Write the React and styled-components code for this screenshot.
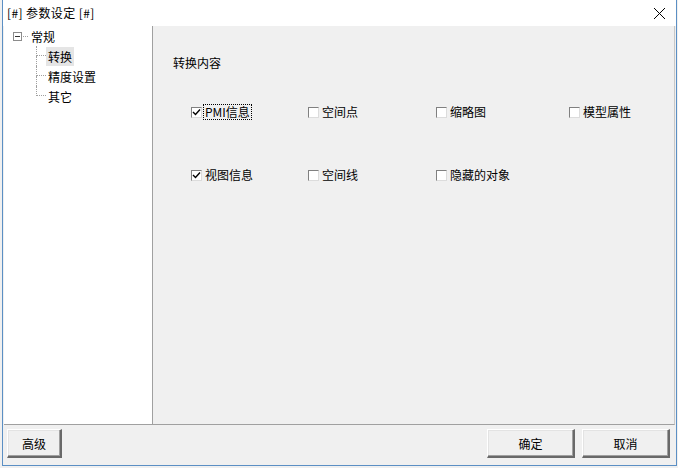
import React from 'react';
import styled, { createGlobalStyle } from 'styled-components';

const GlobalStyle = createGlobalStyle`
	html, body {
		margin: 0;
		padding: 0;
		background: #f0f0f0;
	}
	body {
		font-family: 'Noto Sans CJK SC', 'Liberation Sans', sans-serif;
		font-size: 12px;
		color: #000;
	}
`;

const Window = styled.div`
	margin-left: 2px;
	width: 675px;
	height: 466px;
	box-sizing: border-box;
	border: 1px solid #5b8fc4;
	border-top: none;
	background: #f0f0f0;
	display: flex;
	flex-direction: column;
`;

const TitleBar = styled.div`
	height: 26px;
	flex: none;
	background: #fff;
	display: flex;
	align-items: center;
	justify-content: space-between;
	padding: 0 6px 0 4px;
`;

const TitleText = styled.div`
	font-size: 12px;
	line-height: 16px;
	letter-spacing: 0.4px;
`;

const CloseBtn = styled.div`
	width: 16px;
	height: 16px;
	display: flex;
	align-items: center;
	justify-content: center;
	margin-right: 3px;
`;

const Body = styled.div`
	flex: 1;
	display: flex;
	flex-direction: column;
	padding: 0 1px 0 1px;
`;

const Content = styled.div`
	height: 399px;
	display: flex;
	box-sizing: border-box;
	border-right: 1px solid #c8c8c8;
	border-bottom: 1px solid #a0a0a0;
`;

const TreePanel = styled.div`
	width: 148px;
	flex: none;
	background: #fff;
	border-right: 1px solid #a0a0a0;
	padding-top: 1px;
`;

const TreeRow = styled.div`
	display: flex;
	align-items: center;
	height: ${(p) => (p.$root ? 19 : 20)}px;
	padding-left: ${(p) => (p.$root ? 9 : 32)}px;
`;

const Expander = styled.div`
	width: 7px;
	height: 7px;
	border: 1px solid #8c8c8c;
	display: flex;
	align-items: center;
	justify-content: center;
	flex: none;

	&::after {
		content: '';
		width: 5px;
		height: 1px;
		background: #333;
	}
`;

const RootDots = styled.div`
	width: 5px;
	border-top: 1px dotted #a0a0a0;
	margin: 0 1px 0 1px;
`;

const Connector = styled.div`
	width: 10px;
	height: 100%;
	display: flex;
	flex-direction: column;
	flex: none;
`;

const ConnTop = styled.div`
	height: 10px;
	box-sizing: border-box;
	border-left: 1px dotted #a0a0a0;
	border-bottom: 1px dotted #a0a0a0;
`;

const ConnBottom = styled.div`
	flex: 1;
	border-left: ${(p) => (p.$last ? 'none' : '1px dotted #a0a0a0')};
`;

const NodeLabel = styled.div`
	padding: 2px 2px;
	line-height: 15px;
	background: ${(p) => (p.$selected ? '#e5e5e5' : 'transparent')};
`;

const MainPanel = styled.div`
	flex: 1;
	padding: 29px 0 0 20px;
`;

const SectionTitle = styled.div`
	line-height: 16px;
	margin-bottom: 33px;
`;

const OptionGrid = styled.div`
	display: grid;
	grid-template-columns: 117px 128px 133px 1fr;
	row-gap: 47px;
	padding-left: 18px;
`;

const Option = styled.label`
	display: flex;
	align-items: center;
	height: 16px;
	gap: 2px;
`;

const Box = styled.div`
	width: 11px;
	height: 11px;
	box-sizing: border-box;
	background: #fff;
	border-top: 1px solid #808080;
	border-left: 1px solid #808080;
	border-right: 1px solid #dcdcdc;
	border-bottom: 1px solid #dcdcdc;
	display: flex;
	align-items: center;
	justify-content: center;
	flex: none;
`;

const OptionText = styled.span`
	line-height: 14px;
	padding: 0 1px;
	outline: ${(p) => (p.$focus ? '1px dotted #000' : 'none')};
`;

const Footer = styled.div`
	flex: 1;
	display: flex;
	align-items: flex-start;
	justify-content: space-between;
	padding: 4px 5px 0 3px;
`;

const ButtonGroup = styled.div`
	display: flex;
	gap: 7px;
`;

const Button = styled.button`
	width: ${(p) => p.$w}px;
	height: 29px;
	box-sizing: border-box;
	background: #f0f0f0;
	border-top: 1px solid #fff;
	border-left: 1px solid #fff;
	border-right: 2px solid #696969;
	border-bottom: 2px solid #696969;
	box-shadow: inset -1px -1px 0 #a0a0a0, inset 1px 1px 0 #e3e3e3;
	font-family: 'Noto Sans CJK SC', 'Liberation Sans', sans-serif;
	font-size: 12px;
	color: #000;
	padding: 0;
`;

const Check = () => (
	<svg width="9" height="9" viewBox="0 0 9 9">
		<path d="M1 4 L3.5 6.5 L8 1.5" fill="none" stroke="#000" strokeWidth="1.4" />
	</svg>
);

const options = [
	{ label: 'PMI信息', checked: true, focus: true },
	{ label: '空间点' },
	{ label: '缩略图' },
	{ label: '模型属性' },
	{ label: '视图信息', checked: true },
	{ label: '空间线' },
	{ label: '隐藏的对象' },
];

const children = ['转换', '精度设置', '其它'];

const App = () => {
	return (
		<>
			<GlobalStyle />
			<Window>
				<TitleBar>
					<TitleText>[#] 参数设定 [#]</TitleText>
					<CloseBtn>
						<svg width="13" height="13" viewBox="0 0 13 13">
							<path d="M1 1 L12 12 M12 1 L1 12" stroke="#000" strokeWidth="1" />
						</svg>
					</CloseBtn>
				</TitleBar>
				<Body>
					<Content>
						<TreePanel>
							<TreeRow $root>
								<Expander />
								<RootDots />
								<NodeLabel>常规</NodeLabel>
							</TreeRow>
							{children.map((c, i) => (
								<TreeRow key={c}>
									<Connector>
										<ConnTop />
										<ConnBottom $last={i === children.length - 1} />
									</Connector>
									<NodeLabel $selected={i === 0}>{c}</NodeLabel>
								</TreeRow>
							))}
						</TreePanel>
						<MainPanel>
							<SectionTitle>转换内容</SectionTitle>
							<OptionGrid>
								{options.map((o) => (
									<Option key={o.label}>
										<Box>{o.checked && <Check />}</Box>
										<OptionText $focus={o.focus}>{o.label}</OptionText>
									</Option>
								))}
							</OptionGrid>
						</MainPanel>
					</Content>
					<Footer>
						<Button $w={55}>高级</Button>
						<ButtonGroup>
							<Button $w={88}>确定</Button>
							<Button $w={88}>取消</Button>
						</ButtonGroup>
					</Footer>
				</Body>
			</Window>
		</>
	);
};

export default App;
